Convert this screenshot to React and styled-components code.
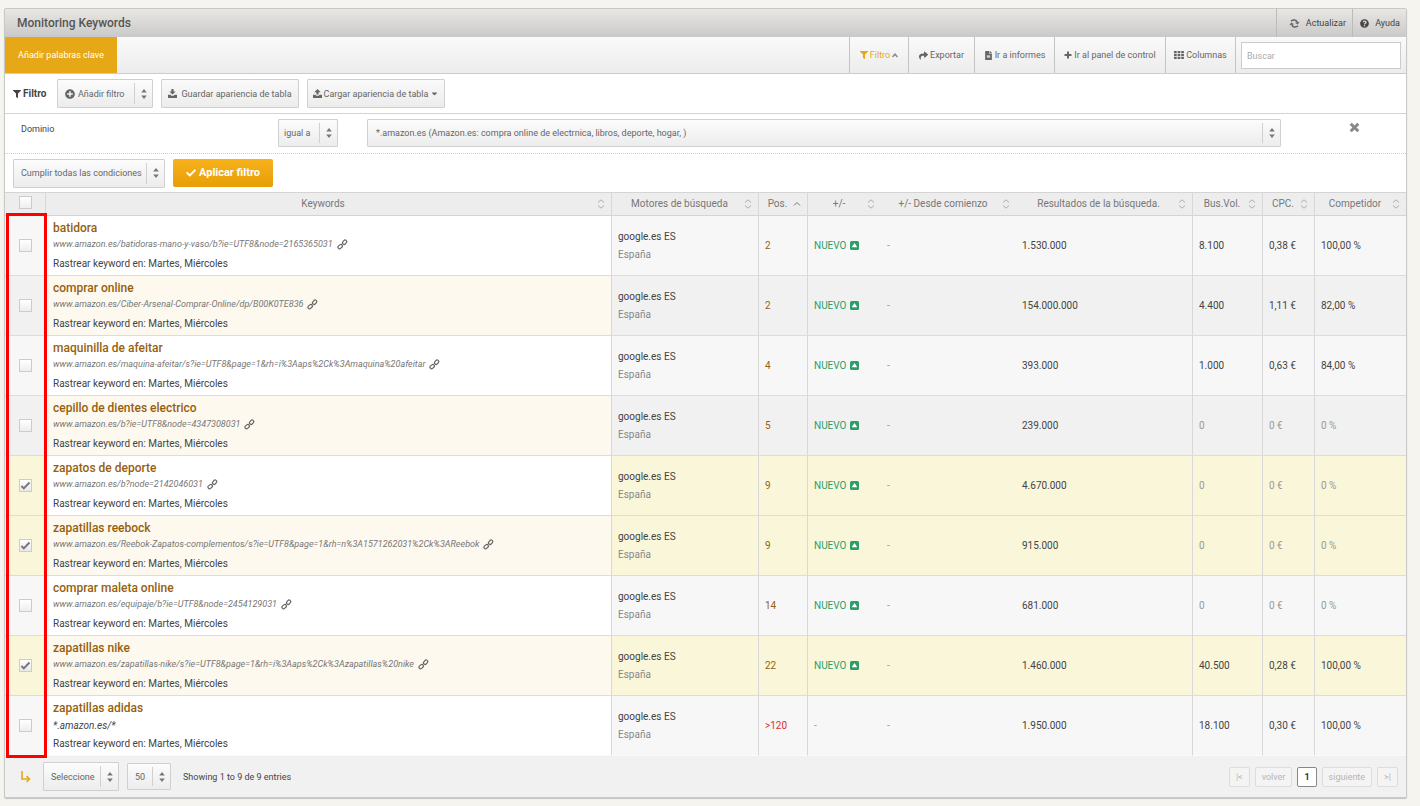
import React, { useState } from "react";
import styled, { createGlobalStyle } from "styled-components";
import {
  FaCaretDown,
  FaCheck,
  FaFileAlt,
  FaFilter,
  FaPlusCircle,
  FaQuestionCircle,
  FaShare
} from "react-icons/fa";

const GlobalStyle = createGlobalStyle`
  * {
    box-sizing: border-box;
  }

  body {
    margin: 0;
    background: #f6f4ef;
    color: #444;
    font: 10px/14px Roboto, "Noto Sans", sans-serif;
  }

  button, input, select {
    font: inherit;
    font-size: 9px;
    color: inherit;
  }

  button {
    cursor: pointer;
  }

  svg {
    flex: none;
  }
`;

const Panel = styled.main`
  margin: 8px 13px 8px 4px;
  border: 1px solid #c8c8c8;
  border-radius: 2px;
  background: #fff;
  box-shadow: 0 1px 1px #c4c4c4;
`;

const TitleBar = styled.header`
  display: flex;
  height: 28px;
  background: linear-gradient(#e9e7e2, #c9c9c9);

  h1 {
    flex: 1;
    margin: 0;
    padding-left: 12px;
    font-size: 12px;
    font-weight: 500;
    line-height: 28px;
    color: #555;
  }
`;

const TitleButton = styled.button`
  display: flex;
  align-items: center;
  justify-content: flex-end;
  gap: 6px;
  width: ${(props) => props.$width}px;
  padding: 0 6px;
  border: 0;
  border-left: 1px solid #bbb;
  background: none;
  color: #444;
`;

const Toolbar = styled.nav`
  display: flex;
  height: 37px;
  border-bottom: 1px solid #ccc;
  background: linear-gradient(#fafafa, #ececec);
`;

const AddButton = styled.button`
  width: 112px;
  padding: 0;
  margin-right: auto;
  border: 0;
  background: #e6a817;
  color: #fff;
`;

const ToolButton = styled.button`
  display: flex;
  align-items: center;
  justify-content: center;
  gap: 2px;
  width: ${(props) => props.$width}px;
  padding: 0;
  border: 0;
  border-left: 1px solid #c4c4c4;
  background: none;
  color: ${(props) => (props.$active ? "#e6a817" : "#666")};
  white-space: nowrap;
`;

const SearchBox = styled.div`
  padding: 5px;
  border-left: 1px solid #c4c4c4;

  input {
    width: 160px;
    height: 27px;
    padding: 0 5px;
    border: 1px solid #ccc;
    background: #fff;
  }

  input::placeholder {
    color: #aaa;
  }
`;

const FilterRow = styled.div`
  display: flex;
  align-items: center;
  gap: 8px;
  height: ${(props) => (props.$last ? 38 : 40)}px;
  padding: 0 8px;
  border-bottom: ${(props) => (props.$last ? "0" : "1px solid #d4d4d4")};
`;

const FilterTitle = styled.h2`
  display: flex;
  align-items: center;
  gap: 2px;
  width: 36px;
  margin: 0;
  font-size: 10px;
  font-weight: 700;
  color: #444;
`;

const FlatButton = styled.button`
  display: flex;
  align-items: center;
  justify-content: center;
  gap: ${(props) => (props.$menu ? 2 : 4)}px;
  width: 138px;
  height: 29px;
  padding: 0;
  border: 1px solid #d0d0d0;
  border-radius: 1px;
  background: linear-gradient(#fafafa, #ececec);
  color: #666;
  white-space: nowrap;
`;

const ApplyButton = styled.button`
  display: flex;
  align-items: center;
  justify-content: center;
  gap: 3px;
  width: 100px;
  height: 28px;
  padding: 0;
  border: 0;
  border-radius: 2px;
  background: linear-gradient(#f7b11b, #e79f06);
  color: #fff;
  font-size: 11px;
  font-weight: 700;
`;

const SelectBox = styled.span`
  display: flex;
  position: relative;
  align-items: center;
  width: ${(props) => (props.$width ? `${props.$width}px` : "auto")};
  height: ${(props) => props.$height || 29}px;
  border: 1px solid #d0d0d0;
  border-radius: 1px;
  background: linear-gradient(#fcfcfc, #ececec);
  color: #666;

  > svg {
    margin-left: 7px;
  }

  select {
    width: 100%;
    height: 100%;
    padding: 0 20px 0 ${(props) => props.$indent || 7}px;
    border: 0;
    background: none;
    appearance: none;
  }
`;

const Arrows = styled.span`
  display: flex;
  position: absolute;
  top: 3px;
  right: 0;
  bottom: 3px;
  align-items: center;
  justify-content: center;
  width: 18px;
  border-left: 1px solid #d0d0d0;
  pointer-events: none;
`;

const Condition = styled.div`
  display: grid;
  grid-template-columns: 257px 67px minmax(0, 1fr) 103px;
  height: 40px;
  padding: 5px 0 0 16px;
  border-bottom: 1px dotted #ccc;

  label {
    padding-top: 3px;
    font-size: 9px;
  }

  ${SelectBox}:nth-child(3) {
    margin: 0 22px;
  }
`;

const RemoveButton = styled.button`
  justify-self: center;
  align-self: start;
  padding: 3px 0 0;
  border: 0;
  background: none;
  color: #888;
`;

const TableWrap = styled.div`
  position: relative;
`;

const Highlight = styled.div`
  position: absolute;
  top: 21px;
  bottom: -2px;
  left: 1px;
  width: 41px;
  border: 3px solid #f00;
  pointer-events: none;
`;

const Table = styled.table`
  width: 100%;
  border-spacing: 0;
  table-layout: fixed;

  th {
    height: 24px;
    padding: 0;
    border-top: 1px solid #d4d4d4;
    border-bottom: 1px solid #d4d4d4;
    background: #ededed;
    color: #777;
    font-weight: 400;
  }

  th:first-child {
    padding-top: 2px;
    vertical-align: top;
    line-height: 13px;
  }

  td {
    height: 60px;
    padding: 0 6px;
    border-bottom: 1px solid #dcdcdc;
  }

  th:nth-child(-n + 4),
  td:nth-child(-n + 4),
  th:nth-child(n + 7):not(:last-child),
  td:nth-child(n + 7):not(:last-child) {
    border-right: 1px solid #d8d8d8;
  }

  tbody tr:last-child td {
    border-bottom-color: #fafafa;
  }
`;

const Row = styled.tr`
  background: ${(props) => (props.$selected ? "#f9f6da" : "#f7f7f7")};

  &:nth-child(even) {
    background: ${(props) => (props.$selected ? "#f9f6da" : "#f1f1f1")};
  }

  td:nth-child(2) {
    padding-left: 7px;
    background: #fff;
    vertical-align: top;
  }

  &:nth-child(even) td:nth-child(2) {
    background: #fdf9ef;
  }
`;

const SortHeader = styled.div`
  display: flex;
  align-items: center;
  padding: 0 6px 0 3px;
  white-space: nowrap;

  span {
    flex: 1;
  }
`;

const CheckCell = styled.td`
  text-align: center;
`;

const Checkbox = styled.input.attrs({ type: "checkbox" })`
  display: inline-block;
  width: 13px;
  height: 13px;
  margin: 0;
  border: 1px solid #ccc;
  background: linear-gradient(#fff, #eee);
  appearance: none;
  vertical-align: middle;

  &:checked {
    background: url("data:image/svg+xml,%3Csvg xmlns='http://www.w3.org/2000/svg' viewBox='0 0 11 11'%3E%3Cpath d='M1.5 6l2.3 2.4L9.5 2.5' fill='none' stroke='%23777' stroke-width='2'/%3E%3C/svg%3E"),
      linear-gradient(#fff, #e8e8e8);
  }
`;

const Keyword = styled.a`
  display: block;
  padding-top: 3px;
  color: #965f0d;
  font-size: 12px;
  font-weight: 500;
  line-height: 18px;
  text-decoration: none;
`;

const Url = styled.div`
  display: flex;
  align-items: center;
  gap: 4px;
  margin-bottom: 6px;
  color: #777;
  font-size: 9px;
  font-style: italic;
  white-space: nowrap;
`;

const Pattern = styled.div`
  margin-bottom: 2px;
  font-style: italic;
  line-height: 18px;
`;

const Engine = styled.div`
  line-height: 18px;

  small {
    display: block;
    color: #888;
    font-size: 10px;
  }
`;

const Position = styled.td`
  color: ${(props) => (props.$lost ? "#d9302c" : "#965f0d")};
`;

const Change = styled.span`
  display: flex;
  align-items: center;
  gap: 3px;
  color: #2f9d68;
`;

const Value = styled.td`
  color: ${(props) => (props.$muted ? "#999" : "#444")};
`;

const Footer = styled.footer`
  display: flex;
  align-items: center;
  gap: 8px;
  height: 41px;
  padding: 0 8px 0 14px;
  background: #f1f1f1;

  > svg {
    width: 16px;
  }

  p {
    margin: 0 auto 0 4px;
    font-size: 9px;
  }
`;

const Pager = styled.div`
  display: flex;
  gap: 5px;
`;

const PageButton = styled.button`
  min-width: ${(props) => (props.$current ? 18 : 20)}px;
  height: 20px;
  padding: 0 6px;
  border: 1px solid ${(props) => (props.$current ? "#888" : "#ddd")};
  border-radius: 2px;
  background: ${(props) => (props.$current ? "#fff" : "#f4f4f4")};
  color: ${(props) => (props.$current ? "#333" : "#b4b4b4")};
  font-weight: ${(props) => (props.$current ? 700 : 400)};
`;

const TRACKING = "Rastrear keyword en: Martes, Miércoles";

const KEYWORDS = [
  { name: "batidora", url: "www.amazon.es/batidoras-mano-y-vaso/b?ie=UTF8&node=2165365031", pos: "2", results: "1.530.000", volume: "8.100", cpc: "0,38 €", comp: "100,00 %" },
  { name: "comprar online", url: "www.amazon.es/Ciber-Arsenal-Comprar-Online/dp/B00K0TE836", pos: "2", results: "154.000.000", volume: "4.400", cpc: "1,11 €", comp: "82,00 %" },
  { name: "maquinilla de afeitar", url: "www.amazon.es/maquina-afeitar/s?ie=UTF8&page=1&rh=i%3Aaps%2Ck%3Amaquina%20afeitar", pos: "4", results: "393.000", volume: "1.000", cpc: "0,63 €", comp: "84,00 %" },
  { name: "cepillo de dientes electrico", url: "www.amazon.es/b?ie=UTF8&node=4347308031", pos: "5", results: "239.000", volume: "0", cpc: "0 €", comp: "0 %" },
  { name: "zapatos de deporte", url: "www.amazon.es/b?node=2142046031", pos: "9", results: "4.670.000", volume: "0", cpc: "0 €", comp: "0 %" },
  { name: "zapatillas reebock", url: "www.amazon.es/Reebok-Zapatos-complementos/s?ie=UTF8&page=1&rh=n%3A1571262031%2Ck%3AReebok", pos: "9", results: "915.000", volume: "0", cpc: "0 €", comp: "0 %" },
  { name: "comprar maleta online", url: "www.amazon.es/equipaje/b?ie=UTF8&node=2454129031", pos: "14", results: "681.000", volume: "0", cpc: "0 €", comp: "0 %" },
  { name: "zapatillas nike", url: "www.amazon.es/zapatillas-nike/s?ie=UTF8&page=1&rh=i%3Aaps%2Ck%3Azapatillas%20nike", pos: "22", results: "1.460.000", volume: "40.500", cpc: "0,28 €", comp: "100,00 %" },
  { name: "zapatillas adidas", pattern: "*.amazon.es/*", pos: ">120", results: "1.950.000", volume: "18.100", cpc: "0,30 €", comp: "100,00 %" }
];

const COLUMNS = [
  { label: "Keywords" },
  { label: "Motores de búsqueda", width: 147 },
  { label: "Pos.", width: 49, sorted: true },
  { label: "+/-", width: 73 },
  { label: "+/- Desde comienzo", width: 135 },
  { label: "Resultados de la búsqueda.", width: 177 },
  { label: "Bus.Vol.", width: 70 },
  { label: "CPC.", width: 52 },
  { label: "Competidor", width: 91 }
];

function SortIcon({ sorted }) {
  return (
    <svg width="8" height="10" viewBox="0 0 8 10" fill="none" stroke={sorted ? "#777" : "#aaa"}>
      {sorted ? <path d="M1 6.5 4 3.5l3 3" /> : <path d="M1 3.5 4 .8l3 2.7M1 6.5l3 2.7 3-2.7" />}
    </svg>
  );
}

function LinkIcon() {
  return (
    <svg width="11" height="11" viewBox="0 0 11 11" fill="none" stroke="#666" strokeWidth="1.2">
      <rect x="-2.4" y="-1.6" width="4.8" height="3.2" rx="1.6" transform="translate(3.2 7.6) rotate(-40)" />
      <rect x="-2.4" y="-1.6" width="4.8" height="3.2" rx="1.6" transform="translate(7.6 3.2) rotate(-50)" />
    </svg>
  );
}

function RefreshIcon() {
  return (
    <svg width="11" height="11" viewBox="0 0 11 11" fill="none" stroke="#666" strokeWidth="1.5">
      <path d="M2 3.2C4 1.2 7.6 1.6 8.4 4.6M9 7.8C7 9.8 3.4 9.4 2.6 6.4" />
      <path d="M10.6 3.8 8.7 6.6 5.9 4.8zM.4 7.2 2.3 4.4l2.8 1.8z" fill="#666" stroke="none" />
    </svg>
  );
}

function PlusIcon() {
  return (
    <svg width="8" height="8" viewBox="0 0 8 8" stroke="#666" strokeWidth="2">
      <path d="M4 .5v7M.5 4h7" />
    </svg>
  );
}

function CloseIcon() {
  return (
    <svg width="11" height="11" viewBox="0 0 11 11" stroke="currentColor" strokeWidth="3">
      <path d="M1.7 1.7l7.6 7.6M9.3 1.7 1.7 9.3" />
    </svg>
  );
}

function TrayIcon({ up }) {
  return (
    <svg width="9" height="9" viewBox="0 0 9 9" fill="#666">
      <path d={up ? "M4.5 0 7.7 3.2H5.6v2.4H3.4V3.2H1.3z" : "M3.4 0h2.2v2.4h2.1L4.5 5.6 1.3 2.4h2.1z"} />
      <path d="M0 5.8h2.4l.9 1h2.4l.9-1H9V9H0z" />
    </svg>
  );
}

function ColumnsIcon() {
  return (
    <svg width="10" height="8" viewBox="0 0 10 8" fill="#666">
      <path d="M0 0h2.7v2.2H0zM3.6 0h2.7v2.2H3.6zM7.2 0h2.7v2.2H7.2zM0 2.9h2.7v2.2H0zM3.6 2.9h2.7v2.2H3.6zM7.2 2.9h2.7v2.2H7.2zM0 5.8h2.7V8H0zM3.6 5.8h2.7V8H3.6zM7.2 5.8h2.7V8H7.2z" />
    </svg>
  );
}

function NewIcon() {
  return (
    <svg width="9" height="9" viewBox="0 0 9 9">
      <rect width="9" height="9" rx="1.5" fill="#2f9d68" />
      <path d="M4.5 2 7.3 6.2H1.7z" fill="#fff" />
    </svg>
  );
}

function Select({ label, id, width, height, indent, icon, children }) {
  return (
    <SelectBox $width={width} $height={height} $indent={indent}>
      {icon}
      <select id={id} aria-label={id ? undefined : label}>
        <option>{children}</option>
      </select>
      <Arrows>
        <svg width="6" height="10" viewBox="0 0 6 10" fill="#777">
          <path d="M3 0l2.8 3.4H.2zM3 10 .2 6.6h5.6z" />
        </svg>
      </Arrows>
    </SelectBox>
  );
}

function KeywordRow({ item, selected, onToggle }) {
  const muted = item.volume === "0";

  return (
    <Row $selected={selected}>
      <CheckCell>
        <Checkbox aria-label={item.name} checked={selected} onChange={onToggle} />
      </CheckCell>
      <td>
        <Keyword href="#">{item.name}</Keyword>
        {item.url ? (
          <Url>
            {item.url}
            <LinkIcon />
          </Url>
        ) : (
          <Pattern>{item.pattern}</Pattern>
        )}
        <div>{TRACKING}</div>
      </td>
      <td>
        <Engine>
          google.es ES
          <small>España</small>
        </Engine>
      </td>
      <Position $lost={!item.url}>{item.pos}</Position>
      <Value $muted>
        {item.url ? (
          <Change>
            NUEVO <NewIcon />
          </Change>
        ) : (
          "-"
        )}
      </Value>
      <Value $muted>-</Value>
      <Value>{item.results}</Value>
      <Value $muted={muted}>{item.volume}</Value>
      <Value $muted={muted}>{item.cpc}</Value>
      <Value $muted={muted}>{item.comp}</Value>
    </Row>
  );
}

export default function App() {
  const [selected, setSelected] = useState([4, 5, 7]);

  const toggle = (index) =>
    setSelected((current) =>
      current.includes(index)
        ? current.filter((i) => i !== index)
        : [...current, index]
    );

  const toggleAll = () =>
    setSelected((current) =>
      current.length === KEYWORDS.length ? [] : KEYWORDS.map((_, i) => i)
    );

  return (
    <>
      <GlobalStyle />
      <Panel>
        <TitleBar>
          <h1>Monitoring Keywords</h1>
          <TitleButton $width={76}>
            <RefreshIcon /> Actualizar
          </TitleButton>
          <TitleButton $width={54}>
            <FaQuestionCircle size={9} /> Ayuda
          </TitleButton>
        </TitleBar>

        <Toolbar>
          <AddButton>Añadir palabras clave</AddButton>
          <ToolButton $width={59} $active>
            <FaFilter size={8} /> Filtro
            <svg width="6" height="5" viewBox="0 0 6 5" fill="none" stroke="#888" strokeWidth="1.5">
              <path d="M.5 4 3 1.2 5.5 4" />
            </svg>
          </ToolButton>
          <ToolButton $width={66}>
            <FaShare size={9} /> Exportar
          </ToolButton>
          <ToolButton $width={80}>
            <FaFileAlt size={9} /> Ir a informes
          </ToolButton>
          <ToolButton $width={111}>
            <PlusIcon /> Ir al panel de control
          </ToolButton>
          <ToolButton $width={70}>
            <ColumnsIcon /> Columnas
          </ToolButton>
          <SearchBox>
            <input type="search" placeholder="Buscar" aria-label="Buscar" />
          </SearchBox>
        </Toolbar>

        <FilterRow>
          <FilterTitle>
            <FaFilter size={8} /> Filtro
          </FilterTitle>
          <Select label="Añadir filtro" width={96} indent={3} icon={<FaPlusCircle size={10} />}>
            Añadir filtro
          </Select>
          <FlatButton>
            <TrayIcon /> Guardar apariencia de tabla
          </FlatButton>
          <FlatButton $menu>
            <TrayIcon up /> Cargar apariencia de tabla
            <FaCaretDown size={9} />
          </FlatButton>
        </FilterRow>

        <Condition>
          <label htmlFor="domain">Dominio</label>
          <Select label="Operador" width={60} height={28} indent={5}>
            igual a
          </Select>
          <Select id="domain" height={28} indent={8}>
            *.amazon.es (Amazon.es: compra online de electrnica, libros, deporte, hogar, )
          </Select>
          <RemoveButton aria-label="Quitar filtro">
            <CloseIcon />
          </RemoveButton>
        </Condition>

        <FilterRow $last>
          <Select label="Condiciones" width={152}>
            Cumplir todas las condiciones
          </Select>
          <ApplyButton>
            <FaCheck size={10} /> Aplicar filtro
          </ApplyButton>
        </FilterRow>

        <TableWrap>
          <Table>
            <colgroup>
              <col width="41" />
              {COLUMNS.map((column) => (
                <col key={column.label} width={column.width} />
              ))}
            </colgroup>
            <thead>
              <tr>
                <th>
                  <Checkbox
                    aria-label="Seleccionar todo"
                    checked={selected.length === KEYWORDS.length}
                    onChange={toggleAll}
                  />
                </th>
                {COLUMNS.map((column) => (
                  <th key={column.label}>
                    <SortHeader>
                      <span>{column.label}</span>
                      <SortIcon sorted={column.sorted} />
                    </SortHeader>
                  </th>
                ))}
              </tr>
            </thead>
            <tbody>
              {KEYWORDS.map((item, index) => (
                <KeywordRow
                  key={item.name}
                  item={item}
                  selected={selected.includes(index)}
                  onToggle={() => toggle(index)}
                />
              ))}
            </tbody>
          </Table>
          <Highlight />
        </TableWrap>

        <Footer>
          <svg height="14" viewBox="0 0 16 14" fill="none" stroke="#e6a817" strokeWidth="1.6">
            <path d="M3 1v8h7M7.5 6l3 3-3 3" />
          </svg>
          <Select label="Acción" width={76}>
            Seleccione
          </Select>
          <Select label="Filas por página" width={44} height={27}>
            50
          </Select>
          <p>Showing 1 to 9 de 9 entries</p>
          <Pager>
            <PageButton disabled aria-label="Primera">|&lt;</PageButton>
            <PageButton disabled>volver</PageButton>
            <PageButton $current>1</PageButton>
            <PageButton disabled>siguiente</PageButton>
            <PageButton disabled aria-label="Última">&gt;|</PageButton>
          </Pager>
        </Footer>
      </Panel>
    </>
  );
}
